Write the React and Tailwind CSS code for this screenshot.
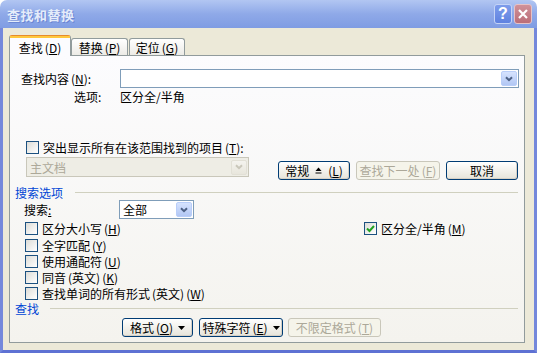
import React from "react";

const Acc = ({ k }) => (
  <span className="ml-[2px]">
    (<span className="underline">{k}</span>)
  </span>
);

const Check = ({ checked }) => (
  <span className="w-[13px] h-[13px] shrink-0 border border-[#1C5180] bg-gradient-to-br from-[#DCDCD7] to-white flex items-center justify-center">
    {checked && (
      <svg width="9" height="9" viewBox="0 0 9 9">
        <path d="M1 4.5 L3.5 7 L8 2" fill="none" stroke="#21A121" strokeWidth="2" />
      </svg>
    )}
  </span>
);

const Chevron = ({ color = "#4D6185" }) => (
  <svg width="8" height="6" viewBox="0 0 8 6">
    <path d="M1 1.2 L4 4.2 L7 1.2" fill="none" stroke={color} strokeWidth="2" />
  </svg>
);

const Combo = ({ w, h = "h-[19px]", text, disabled }) => (
  <div
    className={`${w} ${h} border flex items-center pl-[3px] pr-[1px] ${
      disabled ? "border-[#C9C7BA] bg-[#EEEDE5] text-[#ACA899]" : "border-[#7F9DB9] bg-white text-black"
    }`}
  >
    <span className="flex-1 leading-[13px]">{text}</span>
    <span
      className={`w-[16px] h-[15px] rounded-[2px] border flex items-center justify-center ${
        disabled
          ? "border-[#E2E0D6] bg-gradient-to-b from-[#F4F3EE] to-[#E8E6DC]"
          : "border-[#B9CEF9] bg-gradient-to-b from-[#D6E3FE] to-[#B2C7F4]"
      }`}
    >
      <Chevron color={disabled ? "#C9C7BA" : "#4D6185"} />
    </span>
  </div>
);

const Btn = ({ w, children, disabled }) => (
  <div
    className={`${w} h-[19px] rounded-[3px] border flex items-center justify-center leading-[13px] ${
      disabled
        ? "border-[#C9C7BA] bg-[#F5F4EA] text-[#ACA899]"
        : "border-[#003C74] bg-gradient-to-b from-white to-[#E6E4DA] text-black shadow-[inset_-1px_-1px_0_#D6D0C5]"
    }`}
  >
    {children}
  </div>
);

const DownTri = () => (
  <svg width="7" height="4" viewBox="0 0 7 4" className="ml-[5px]">
    <path d="M0 0 L7 0 L3.5 4 Z" fill="#000" />
  </svg>
);

const UpTri = () => (
  <svg width="7" height="7" viewBox="0 0 7 7" className="mx-[6px]">
    <path d="M0.5 4 L6.5 4 L3.5 0.5 Z" fill="#000" />
    <rect x="0.5" y="5.5" width="6" height="1" fill="#000" />
  </svg>
);

const CheckRow = ({ children, checked }) => (
  <div className="flex items-center h-[13px]">
    <Check checked={checked} />
    <span className="ml-[4px] leading-[13px] whitespace-nowrap">{children}</span>
  </div>
);

export default function App() {
  return (
    <div className="w-[537px] h-[353px] flex flex-col rounded-t-[7px] overflow-hidden text-[12px] leading-[13px] text-black [font-family:'Noto_Sans_CJK_SC','Noto_Sans',sans-serif]">
      {/* Title bar */}
      <div className="h-[28px] shrink-0 flex items-center bg-gradient-to-b from-[#B2C6F2] via-[#8FA9E8] to-[#7F9CE3]">
        <span className="ml-[7px] text-[13px] font-bold text-[#E4ECFA] [text-shadow:1px_1px_0_#6A86D4] tracking-[0.5px]">
          查找和替换
        </span>
        <div className="ml-auto mr-[5px] flex gap-[2px]">
          <div className="w-[18px] h-[20px] rounded-[3px] border border-[#C4D3F6] bg-gradient-to-b from-[#7E9CEB] to-[#5F82E0] flex items-center justify-center text-[16px] font-bold text-white [font-family:'Liberation_Sans',sans-serif] leading-none">
            ?
          </div>
          <div className="w-[18px] h-[20px] rounded-[3px] border border-[#E6C2C6] bg-gradient-to-b from-[#D09199] to-[#BB6E78] flex items-center justify-center">
            <svg width="12" height="12" viewBox="0 0 12 12">
              <path d="M2 2 L10 10 M10 2 L2 10" stroke="#fff" strokeWidth="2.2" />
            </svg>
          </div>
        </div>
      </div>

      {/* Body */}
      <div className="flex-1 flex flex-col bg-[#ECE9D8] border-x-[3px] border-b-[3px] border-x-[#7488DB] border-b-[#5E71D3] pl-[6px] pt-[7px]">
        {/* Tabs */}
        <div className="flex items-end h-[20px]">
          <div className="relative z-10 w-[62px] h-[21px] -mb-[1px] rounded-t-[3px] border-x border-t border-[#919B9C] border-t-[#E68B2C] bg-[#FCFCFE] flex flex-col">
            <div className="h-[2px] bg-[#FFC83C]" />
            <div className="flex-1 flex items-center justify-center leading-[13px]">
              查找<Acc k="D" />
            </div>
          </div>
          <div className="w-[57px] h-[17px] rounded-t-[3px] border-x border-t border-[#919B9C] bg-gradient-to-b from-white to-[#ECEBE6] flex items-center justify-center leading-[13px]">
            替换<Acc k="P" />
          </div>
          <div className="ml-[1px] w-[56px] h-[17px] rounded-t-[3px] border-x border-t border-[#919B9C] bg-gradient-to-b from-white to-[#ECEBE6] flex items-center justify-center leading-[13px]">
            定位<Acc k="G" />
          </div>
        </div>

        {/* Panel */}
        <div className="w-[516px] h-[288px] border border-[#919B9C] bg-gradient-to-b from-[#FCFCFE] to-[#F4F3EE] flex flex-col">
          {/* Row 1 */}
          <div className="mt-[13px] h-[19px] flex items-center">
            <span className="w-[110px] pl-[11px] leading-[13px] whitespace-nowrap">
              查找内容<Acc k="N" />:
            </span>
            <Combo w="w-[399px]" text="" />
          </div>
          {/* Row 2 */}
          <div className="mt-[1px] h-[14px] flex items-center">
            <span className="w-[110px] pl-[64px] leading-[13px]">选项:</span>
            <span className="leading-[13px]">区分全/半角</span>
          </div>
          {/* Row 3 */}
          <div className="mt-[38px] ml-[16px]">
            <CheckRow>
              突出显示所有在该范围找到的项目<Acc k="T" />:
            </CheckRow>
          </div>
          {/* Row 4 */}
          <div className="mt-[3px] h-[24px] flex items-start">
            <div className="ml-[16px]">
              <Combo w="w-[223px]" h="h-[20px]" text="主文档" disabled />
            </div>
            <div className="ml-[29px] mt-[4px] flex gap-[6px]">
              <Btn w="w-[72px]">
                常规
                <UpTri />
                (<span className="underline">L</span>)
              </Btn>
              <Btn w="w-[84px]" disabled>
                查找下一处<Acc k="F" />
              </Btn>
              <Btn w="w-[72px]">取消</Btn>
            </div>
          </div>
          {/* Group: 搜索选项 */}
          <div className="mt-[5px] h-[13px] flex items-center">
            <span className="pl-[5px] leading-[13px] text-[#0046D5] whitespace-nowrap">搜索选项</span>
            <div className="ml-[12px] mr-[6px] flex-1 h-px bg-[#D0D0BF]" />
          </div>
          {/* 搜索 */}
          <div className="mt-[1px] h-[19px] flex items-center">
            <span className="w-[109px] pl-[14px] leading-[13px]">
              搜索<span className="underline">:</span>
            </span>
            <Combo w="w-[75px]" text="全部" />
          </div>
          {/* checkboxes */}
          <div className="mt-[3px] flex">
            <div className="ml-[15px] w-[339px]">
              <CheckRow>
                区分大小写<Acc k="H" />
              </CheckRow>
            </div>
            <CheckRow checked>
              区分全/半角<Acc k="M" />
            </CheckRow>
          </div>
          <div className="mt-[4px] ml-[15px]">
            <CheckRow>
              全字匹配<Acc k="Y" />
            </CheckRow>
          </div>
          <div className="mt-[3px] ml-[15px]">
            <CheckRow>
              使用通配符<Acc k="U" />
            </CheckRow>
          </div>
          <div className="mt-[3px] ml-[15px]">
            <CheckRow>
              同音<span className="ml-[2px]">(英文)</span>
              <Acc k="K" />
            </CheckRow>
          </div>
          <div className="mt-[3px] ml-[15px]">
            <CheckRow>
              查找单词的所有形式<span className="ml-[2px]">(英文)</span>
              <Acc k="W" />
            </CheckRow>
          </div>
          {/* Group: 查找 */}
          <div className="mt-[2px] h-[13px] flex items-center">
            <span className="pl-[5px] leading-[13px] text-[#0046D5] whitespace-nowrap">查找</span>
            <div className="ml-[11px] mr-[6px] flex-1 h-px bg-[#D0D0BF]" />
          </div>
          {/* Bottom buttons */}
          <div className="mt-[3px] ml-[112px] flex">
            <Btn w="w-[71px]">
              格式<Acc k="O" />
              <DownTri />
            </Btn>
            <div className="ml-[6px]">
              <Btn w="w-[84px]">
                特殊字符<Acc k="E" />
                <DownTri />
              </Btn>
            </div>
            <div className="ml-[5px]">
              <Btn w="w-[93px]" disabled>
                不限定格式<Acc k="T" />
              </Btn>
            </div>
          </div>
        </div>
      </div>
    </div>
  );
}
